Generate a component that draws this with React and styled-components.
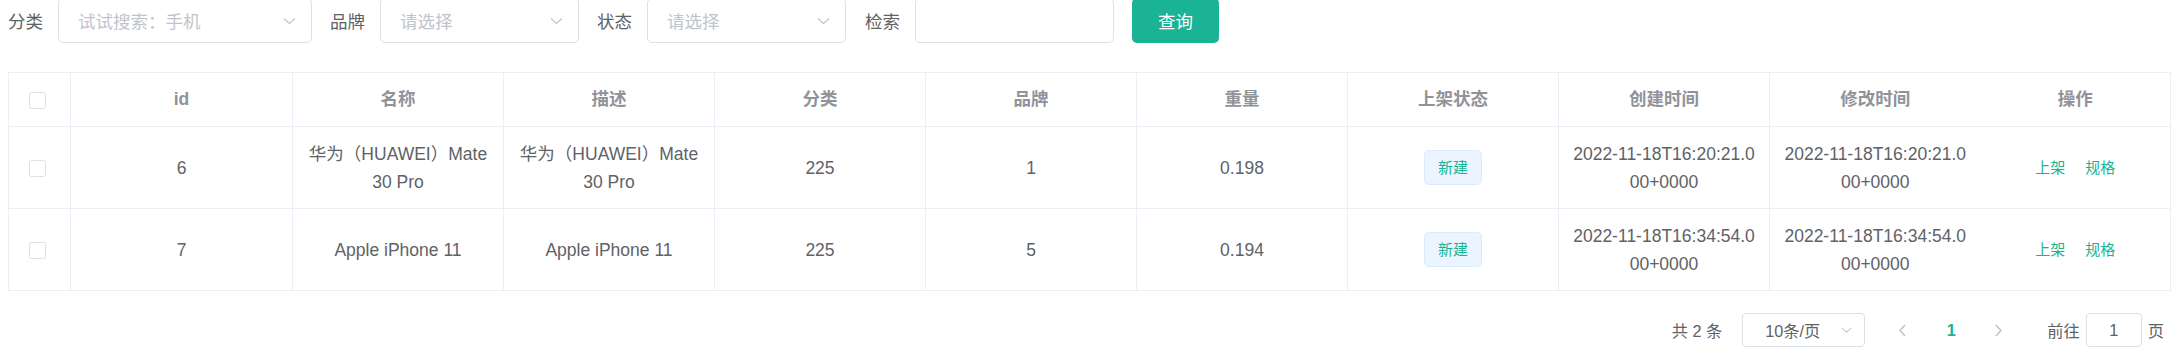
import React from 'react';
import styled, { createGlobalStyle } from 'styled-components';

const teal = '#1ab394';

const GlobalStyle = createGlobalStyle`
  html, body {
    margin: 0;
    padding: 0;
    background: #ffffff;
  }
  body {
    font-family: "Liberation Sans", "Noto Sans CJK SC", sans-serif;
    color: #606266;
  }
  * {
    box-sizing: border-box;
  }
`;

const Page = styled.div`
  width: 2178px;
  height: 363px;
  padding: 0 8px;
  overflow: hidden;
`;

const FilterBar = styled.div`
  display: flex;
  align-items: center;
  height: 45px;
  margin-top: -2px;
`;

const Label = styled.span`
  font-size: 17.5px;
  color: #606266;
  margin-right: 15px;
  white-space: nowrap;
`;

const Field = styled.div`
  width: ${p => p.$w}px;
  height: 45px;
  margin-right: ${p => p.$mr}px;
  padding: 0 15px 0 19px;
  border: 1px solid #dcdfe6;
  border-radius: 5px;
  display: flex;
  align-items: center;
  justify-content: space-between;
  font-size: 17.5px;
  color: #c0c4cc;
  background: #ffffff;
`;

const QueryButton = styled.button`
  width: 87px;
  height: 45px;
  border: none;
  border-radius: 5px;
  background: ${teal};
  color: #ffffff;
  font-family: inherit;
  font-size: 17.5px;
  padding: 0;
`;

const Table = styled.table`
  margin-top: 29px;
  width: 2162px;
  table-layout: fixed;
  border-collapse: collapse;
  border: 1px solid #ebeef5;
  font-size: 17.5px;
`;

const Th = styled.th`
  padding: 12px 12.5px 13px;
  line-height: 28px;
  font-weight: bold;
  color: #909399;
  text-align: ${p => (p.$left ? 'left' : 'center')};
  padding-left: ${p => (p.$left ? '20px' : '12.5px')};
  border-bottom: 1px solid #ebeef5;
  border-right: ${p => (p.$open ? 'none' : '1px solid #ebeef5')};
`;

const Td = styled.td`
  padding: 12.5px;
  line-height: 28px;
  color: #606266;
  text-align: ${p => (p.$left ? 'left' : 'center')};
  padding-left: ${p => (p.$left ? '20px' : '12.5px')};
  word-break: break-all;
  border-bottom: 1px solid #ebeef5;
  border-right: ${p => (p.$open ? 'none' : '1px solid #ebeef5')};
`;

const Checkbox = styled.span`
  display: inline-block;
  width: 17px;
  height: 17px;
  border: 1px solid #dcdfe6;
  border-radius: 2.5px;
  background: #ffffff;
  vertical-align: middle;
`;

const Tag = styled.span`
  display: inline-block;
  height: 35px;
  line-height: 33px;
  padding: 0 12.5px;
  font-size: 15px;
  color: ${teal};
  background: #ecf5ff;
  border: 1px solid #d9ecff;
  border-radius: 5px;
  vertical-align: middle;
`;

const LinkButton = styled.span`
  font-size: 15px;
  color: ${teal};
  margin-left: ${p => (p.$first ? 0 : 20)}px;
`;

const Pagination = styled.div`
  display: flex;
  justify-content: flex-end;
  align-items: center;
  height: 34px;
  margin-top: 22px;
  padding-right: 6px;
  font-size: 16.25px;
  color: #606266;
`;

const Total = styled.span`
  margin-right: 20px;
  white-space: pre;
`;

const SizeSelect = styled.div`
  width: 123px;
  height: 34px;
  margin-right: 19px;
  padding: 0 12px 0 22px;
  border: 1px solid #dcdfe6;
  border-radius: 4px;
  display: flex;
  align-items: center;
  justify-content: space-between;
`;

const NavButton = styled.span`
  width: ${p => p.$w}px;
  height: 34px;
  display: flex;
  align-items: center;
  justify-content: center;
`;

const PageNumber = styled.span`
  width: 62px;
  text-align: center;
  font-weight: bold;
  color: ${teal};
`;

const Jumper = styled.div`
  display: flex;
  align-items: center;
  margin-left: 33px;
`;

const JumpInput = styled.div`
  width: 56px;
  height: 34px;
  margin: 0 6px;
  border: 1px solid #dcdfe6;
  border-radius: 4px;
  display: flex;
  align-items: center;
  justify-content: center;
`;

function Chevron({ dir = 'down', size = 13 }) {
  const paths = {
    down: 'M1 1.5 L6.5 6.5 L12 1.5',
    left: 'M6 1 L1 6.5 L6 12',
    right: 'M1 1 L6 6.5 L1 12'
  };
  const vertical = dir === 'down';
  return (
    <svg
      width={vertical ? size : 7}
      height={vertical ? 8 : 13}
      viewBox={vertical ? '0 0 13 8' : '0 0 7 13'}
      fill="none"
      stroke="#c0c4cc"
      strokeWidth={vertical ? 1.2 : 1.6}
    >
      <path d={paths[dir]} />
    </svg>
  );
}

const columns = [
  { key: 'check', w: 62 },
  { key: 'id', title: 'id', w: 222 },
  { key: 'name', title: '名称', w: 211 },
  { key: 'desc', title: '描述', w: 211 },
  { key: 'category', title: '分类', w: 211 },
  { key: 'brand', title: '品牌', w: 211 },
  { key: 'weight', title: '重量', w: 211 },
  { key: 'status', title: '上架状态', w: 211 },
  { key: 'created', title: '创建时间', w: 211 },
  { key: 'updated', title: '修改时间', w: 211, open: true },
  { key: 'ops', title: '操作', w: 190, open: true }
];

const rows = [
  {
    id: 6,
    name: '华为（HUAWEI）Mate 30 Pro',
    desc: '华为（HUAWEI）Mate 30 Pro',
    category: 225,
    brand: 1,
    weight: '0.198',
    created: '2022-11-18T16:20:21.000+0000',
    updated: '2022-11-18T16:20:21.000+0000'
  },
  {
    id: 7,
    name: 'Apple iPhone 11',
    desc: 'Apple iPhone 11',
    category: 225,
    brand: 5,
    weight: '0.194',
    created: '2022-11-18T16:34:54.000+0000',
    updated: '2022-11-18T16:34:54.000+0000'
  }
];

function renderCell(col, row) {
  if (col.key === 'check') return <Checkbox />;
  if (col.key === 'status') return <Tag>新建</Tag>;
  if (col.key === 'ops')
    return (
      <>
        <LinkButton $first>上架</LinkButton>
        <LinkButton>规格</LinkButton>
      </>
    );
  return row[col.key];
}

export default function App() {
  return (
    <Page>
      <GlobalStyle />
      <FilterBar>
        <Label>分类</Label>
        <Field $w={254} $mr={18}>
          <span>试试搜索：手机</span>
          <Chevron />
        </Field>
        <Label>品牌</Label>
        <Field $w={199} $mr={18}>
          <span>请选择</span>
          <Chevron />
        </Field>
        <Label>状态</Label>
        <Field $w={199} $mr={19}>
          <span>请选择</span>
          <Chevron />
        </Field>
        <Label>检索</Label>
        <Field $w={199} $mr={18} />
        <QueryButton>查询</QueryButton>
      </FilterBar>

      <Table>
        <colgroup>
          {columns.map(c => (
            <col key={c.key} style={{ width: c.w }} />
          ))}
        </colgroup>
        <thead>
          <tr>
            {columns.map(c => (
              <Th key={c.key} $left={c.key === 'check'} $open={c.open}>
                {c.key === 'check' ? <Checkbox /> : c.title}
              </Th>
            ))}
          </tr>
        </thead>
        <tbody>
          {rows.map(r => (
            <tr key={r.id}>
              {columns.map(c => (
                <Td key={c.key} $left={c.key === 'check'} $open={c.open}>
                  {renderCell(c, r)}
                </Td>
              ))}
            </tr>
          ))}
        </tbody>
      </Table>

      <Pagination>
        <Total>共 2 条</Total>
        <SizeSelect>
          <span>10条/页</span>
          <Chevron size={11} />
        </SizeSelect>
        <NavButton $w={36}>
          <Chevron dir="left" />
        </NavButton>
        <PageNumber>1</PageNumber>
        <NavButton $w={32}>
          <Chevron dir="right" />
        </NavButton>
        <Jumper>
          <span>前往</span>
          <JumpInput>1</JumpInput>
          <span>页</span>
        </Jumper>
      </Pagination>
    </Page>
  );
}
